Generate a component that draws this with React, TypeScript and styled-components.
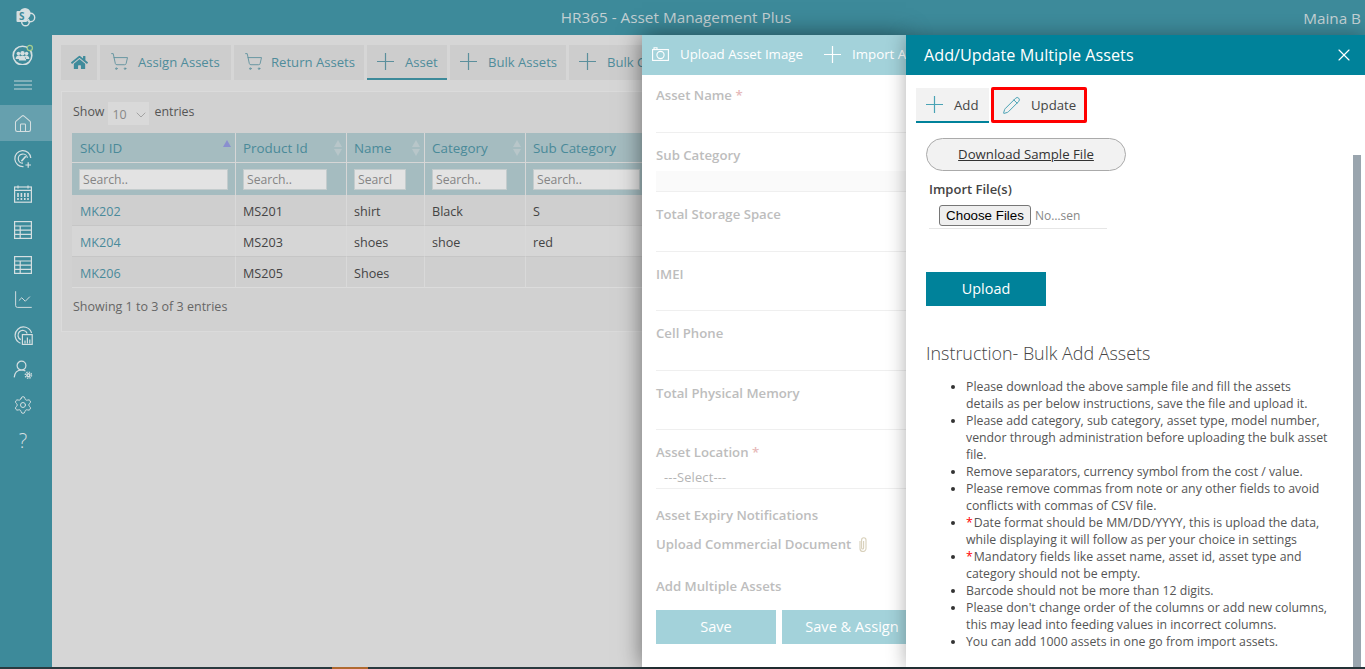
import * as React from 'react'
import styled, { createGlobalStyle } from 'styled-components'
import { ChevronDown, Home, LineChart, Pencil, Settings, ShoppingCart, X } from 'lucide-react'
import { FaHome } from 'react-icons/fa'

const GlobalStyle = createGlobalStyle`
  html, body {
    margin: 0;
    height: 100%;
    overflow: hidden;
    font-family: 'Open Sans', 'Noto Sans', sans-serif;
  }
  * { box-sizing: border-box; }
`

const QuestionMark = styled.span`
  font-size: 20px;
  font-weight: 300;
`

const PlusIcon = ({ size = 17, color = 'currentColor' }: { size?: number; color?: string }) => (
  <svg width={size} height={size} viewBox="0 0 17 17" fill="none" stroke={color} strokeWidth="1.2">
    <path d="M0 8.5h17M8.5 0v17" />
  </svg>
)

const CameraIcon = () => (
  <svg width="17" height="14" viewBox="0 0 17 14" fill="none" stroke="#fff" strokeWidth="1.1">
    <rect x="0.6" y="2.6" width="15.8" height="10.8" />
    <circle cx="8.5" cy="8" r="3.6" />
    <path d="M2 2.4V.8h3v1.6" />
  </svg>
)

const ClipGlyph = () => (
  <svg width="8" height="15" viewBox="0 0 8 15" fill="none" stroke="#d8d0ba" strokeWidth="1.1">
    <path d="M1 4v7.5a3 3 0 0 0 6 0V3a2.2 2.2 0 0 0-4.4 0v8a1 1 0 0 0 2 0V4" />
  </svg>
)

const LogoIcon = () => (
  <svg width="20" height="20" viewBox="0 0 20 20">
    <circle cx="9" cy="6.5" r="5.6" fill="#d5dfe1" />
    <circle cx="14.5" cy="10.5" r="4.2" fill="none" stroke="#d5dfe1" strokeWidth="1.4" />
    <circle cx="9.5" cy="15" r="3.8" fill="none" stroke="#d5dfe1" strokeWidth="1.4" />
    <rect x="0.5" y="4" width="10.5" height="11" rx="1" fill="#d5dfe1" />
    <text x="5.7" y="13" fontSize="10" fontWeight="700" textAnchor="middle" fill="#3d8a9a" fontFamily="'Open Sans', sans-serif">S</text>
  </svg>
)

const TeamIcon = () => (
  <svg width="22" height="22" viewBox="0 -1 22 22">
    <circle cx="10.5" cy="11.5" r="9.3" fill="none" stroke="#d5dfe1" strokeWidth="1.6" />
    <circle cx="6.4" cy="9.6" r="1.8" fill="#d5dfe1" />
    <circle cx="14.6" cy="9.6" r="1.8" fill="#d5dfe1" />
    <circle cx="10.5" cy="9.2" r="2.2" fill="#d5dfe1" />
    <path d="M3.6 15c0-2.4 1.4-3.6 2.9-3.6s2 .6 2 .6l-1 3zM17.4 15c0-2.4-1.4-3.6-2.9-3.6s-2 .6-2 .6l1 3zM6.8 16.4c0-3 1.6-4.6 3.7-4.6s3.7 1.6 3.7 4.6z" fill="#d5dfe1" />
    <circle cx="17.8" cy="4" r="2.6" fill="#3d8a9a" stroke="#a6cf8e" strokeWidth="1.2" />
  </svg>
)

const HamburgerIcon = () => (
  <svg width="18" height="18" viewBox="0 0 18 18" fill="none" stroke="#d5dfe1" strokeWidth="0.9">
    <path d="M0 1h18M0 5h18M0 9h18" />
  </svg>
)

const GaugeIcon = () => (
  <svg width="20" height="20" viewBox="0 0 20 20" fill="none" stroke="#d5dfe1" strokeWidth="1.2">
    <path d="M10.5 17.6A8 8 0 1 1 17.8 9" />
    <path d="M10 14.2a4.6 4.6 0 1 1 4.4-5.4" />
    <path d="M8.4 12.2l4.4-5" strokeWidth="1.6" />
    <path d="M15.2 13.2v5.6M12.4 16h5.6" />
  </svg>
)

const CalendarIcon = () => (
  <svg width="18" height="18" viewBox="0 0 18 18" fill="none" stroke="#d5dfe1" strokeWidth="1.2">
    <rect x="0.6" y="2" width="16.8" height="15.2" />
    <path d="M.6 5.4h16.8M4 .4v3M14 .4v3" />
    <path d="M4 8v7M7.4 8v7M10.8 8v7M14 8v7" strokeWidth="1.6" strokeDasharray="4 1" />
  </svg>
)

const GridIcon = () => (
  <svg width="18" height="18" viewBox="0 0 18 18" fill="none" stroke="#d5dfe1" strokeWidth="1.2">
    <rect x="0.6" y="0.6" width="16.8" height="16.8" />
    <path d="M.6 5h16.8M.6 9.2h16.8M.6 13.4h16.8M6.2 5v12.4" />
  </svg>
)

const RadarIcon = () => (
  <svg width="19" height="19" viewBox="0 0 19 19" fill="none" stroke="#d5dfe1" strokeWidth="1.2">
    <path d="M6.5 17.2A8.4 8.4 0 1 1 17.6 7" />
    <path d="M6.8 13.6a4.8 4.8 0 1 1 6.4-6.2" />
    <rect x="8.4" y="8.6" width="9.8" height="9.8" />
    <path d="M11 17.6v-3M13.4 17.6v-6M15.8 17.6v-4" />
  </svg>
)

const UserGearIcon = () => (
  <svg width="20" height="20" viewBox="0 0 20 20" fill="none" stroke="#d5dfe1" strokeWidth="1.2">
    <circle cx="8.5" cy="5.6" r="4.4" />
    <path d="M1.2 17.4c.4-4.4 3.2-7.4 7.3-7.4 1.5 0 2.8.4 3.9 1.1" />
    <circle cx="15.4" cy="15.2" r="1.5" strokeWidth="1.6" />
    <circle cx="15.4" cy="15.2" r="3.2" strokeWidth="1.2" strokeDasharray="1.4 1.1" />
  </svg>
)

type SideItem = { icon: React.ReactNode; active?: boolean }

const sideItems: SideItem[] = [
  { icon: <TeamIcon /> },
  { icon: <HamburgerIcon /> },
  { icon: <Home size={20} strokeWidth={1.25} />, active: true },
  { icon: <GaugeIcon /> },
  { icon: <CalendarIcon /> },
  { icon: <GridIcon /> },
  { icon: <GridIcon /> },
  { icon: <LineChart size={21} strokeWidth={1.1} /> },
  { icon: <RadarIcon /> },
  { icon: <UserGearIcon /> },
  { icon: <Settings size={20} strokeWidth={1.2} /> },
  { icon: <QuestionMark>?</QuestionMark> },
]

const tabs = [
  { label: 'Assign Assets', icon: <ShoppingCart size={19} strokeWidth={1.1} />, width: 131, gap: 9 },
  { label: 'Return Assets', icon: <ShoppingCart size={19} strokeWidth={1.1} />, width: 130, gap: 8 },
  { label: 'Asset', icon: <PlusIcon />, width: 80, gap: 11, active: true },
  { label: 'Bulk Assets', icon: <PlusIcon />, width: 116, gap: 11 },
  { label: 'Bulk C', icon: <PlusIcon />, width: 130, gap: 11 },
]

const columns = [
  { label: 'SKU ID', width: 164, search: 149, sorted: true },
  { label: 'Product Id', width: 111, search: 84 },
  { label: 'Name', width: 78, search: 52, placeholder: 'Searcl' },
  { label: 'Category', width: 101, search: 75 },
  { label: 'Sub Category', width: 130, search: 107 },
]

const rows = [
  ['MK202', 'MS201', 'shirt', 'Black', 'S'],
  ['MK204', 'MS203', 'shoes', 'shoe', 'red'],
  ['MK206', 'MS205', 'Shoes', '', ''],
]

const fields = [
  { label: 'Asset Name', required: true },
  { label: 'Sub Category', shaded: true },
  { label: 'Total Storage Space' },
  { label: 'IMEI' },
  { label: 'Cell Phone' },
  { label: 'Total Physical Memory' },
]

const instructions = [
  { text: 'Please download the above sample file and fill the assets\ndetails as per below instructions, save the file and upload it.' },
  { text: 'Please add category, sub category, asset type, model number,\nvendor through administration before uploading the bulk asset\nfile.' },
  { text: 'Remove separators, currency symbol from the cost / value.' },
  { text: 'Please remove commas from note or any other fields to avoid\nconflicts with commas of CSV file.' },
  { text: 'Date format should be MM/DD/YYYY, this is upload the data,\nwhile displaying it will follow as per your choice in settings', star: true },
  { text: 'Mandatory fields like asset name, asset id, asset type and\ncategory should not be empty.', star: true },
  { text: 'Barcode should not be more than 12 digits.' },
  { text: "Please don't change order of the columns or add new columns,\nthis may lead into feeding values in incorrect columns." },
  { text: 'You can add 1000 assets in one go from import assets.' },
]

const App = () => {
  return (
    <Page>
      <GlobalStyle />
      <Header>
        <LogoSlot><LogoIcon /></LogoSlot>
        <HeaderTitle>HR365 - Asset Management Plus</HeaderTitle>
        <HeaderUser>Maina B</HeaderUser>
      </Header>
      <Body>
        <Sidebar>
          {sideItems.map((item, i) => (
            <SideButton key={i} $active={item.active}>{item.icon}</SideButton>
          ))}
        </Sidebar>
        <Main>
          <Tabs>
            <HomeTab><FaHome size={17} /></HomeTab>
            {tabs.map((tab) => (
              <Tab key={tab.label} $width={tab.width} $gap={tab.gap} $active={tab.active}>
                {tab.icon}
                <span>{tab.label}</span>
              </Tab>
            ))}
          </Tabs>
          <Card>
            <ShowRow>
              Show
              <PageSize>10<ChevronDown size={16} strokeWidth={1} /></PageSize>
              entries
            </ShowRow>
            <Table>
              <thead>
                <tr>
                  {columns.map((col) => (
                    <Th key={col.label} $width={col.width}>
                      {col.label}
                      <SortMark $sorted={col.sorted} />
                    </Th>
                  ))}
                  <Th $width={700} />
                </tr>
                <tr>
                  {columns.map((col) => (
                    <SearchCell key={col.label}>
                      <SearchInput $width={col.search} placeholder={col.placeholder || 'Search..'} />
                    </SearchCell>
                  ))}
                  <SearchCell />
                </tr>
              </thead>
              <tbody>
                {rows.map((row, r) => (
                  <Row key={row[0]} $even={r % 2 === 1}>
                    {row.map((cell, c) => (
                      <Td key={c} $link={c === 0}>{cell}</Td>
                    ))}
                    <Td />
                  </Row>
                ))}
              </tbody>
            </Table>
            <Showing>Showing 1 to 3 of 3 entries</Showing>
          </Card>
        </Main>
      </Body>
      <Taskbar><TaskbarMark /></Taskbar>

      <BackDrawer>
        <BackHead>
          <BackHeadItem><CameraIcon /><span>Upload Asset Image</span></BackHeadItem>
          <BackHeadItem><PlusIcon color="#fff" /><span>Import A</span></BackHeadItem>
        </BackHead>
        <BackForm>
          {fields.map((field) => (
            <Field key={field.label}>
              <FieldLabel>
                {field.label}
                {field.required && <FaintStar> *</FaintStar>}
              </FieldLabel>
              <FieldInput $shaded={field.shaded} />
            </Field>
          ))}
          <LocationField>
            <FieldLabel>Asset Location<FaintStar> *</FaintStar></FieldLabel>
            <SelectValue>---Select---</SelectValue>
          </LocationField>
          <PlainLabel $top={16}>Asset Expiry Notifications</PlainLabel>
          <PlainLabel $top={9}>
            Upload Commercial Document
            <ClipGlyph />
          </PlainLabel>
          <PlainLabel $top={22}>Add Multiple Assets</PlainLabel>
          <BackActions>
            <FadedButton $width={120}>Save</FadedButton>
            <FadedButton $width={140}>Save &amp; Assign</FadedButton>
          </BackActions>
        </BackForm>
      </BackDrawer>

      <FrontDrawer>
        <FrontHead>
          <FrontTitle>Add/Update Multiple Assets</FrontTitle>
          <CloseButton><X size={20} strokeWidth={1.4} /></CloseButton>
        </FrontHead>
        <ModeTabs>
          <AddTab><PlusIcon color="#4aa3b5" /><span>Add</span></AddTab>
          <UpdateTab><Pencil size={19} strokeWidth={1.2} color="#3f9db0" /><span>Update</span></UpdateTab>
        </ModeTabs>
        <FrontBody>
          <DownloadButton>Download Sample File</DownloadButton>
          <ImportLabel>Import File(s)</ImportLabel>
          <FileRow><FileInput type="file" multiple /></FileRow>
          <UploadButton>Upload</UploadButton>
          <InstructionTitle>Instruction- Bulk Add Assets</InstructionTitle>
          <InstructionList>
            {instructions.map((item) => (
              <Instruction key={item.text} $star={item.star}>{item.text}</Instruction>
            ))}
          </InstructionList>
        </FrontBody>
        <ScrollThumb />
      </FrontDrawer>
    </Page>
  )
}

const Page = styled.div`
  position: relative;
  width: 1365px;
  height: 669px;
  overflow: hidden;
  display: flex;
  flex-direction: column;
  background: #d6d6d6;
`

const Header = styled.header`
  height: 35px;
  flex: none;
  display: flex;
  align-items: center;
  justify-content: center;
  position: relative;
  background: #3d8a9a;
  color: #c3d0d3;
  font-size: 15.3px;
`

const LogoSlot = styled.div`
  position: absolute;
  left: 16px;
  top: 7px;
`

const HeaderTitle = styled.div`
  margin-left: -13px;
  margin-top: -1px;
`

const HeaderUser = styled.div`
  position: absolute;
  right: 4px;
  top: 8px;
`

const Body = styled.div`
  flex: 1;
  min-height: 0;
  display: flex;
`

const Sidebar = styled.nav`
  width: 52px;
  flex: none;
  background: #3d8a9a;
`

const SideButton = styled.div<{ $active?: boolean }>`
  height: 35.2px;
  display: flex;
  align-items: center;
  justify-content: center;
  padding: 2px 6px 0 0;
  color: #d5dfe1;
  background: ${(p) => (p.$active ? '#66a0ae' : 'transparent')};
`

const Main = styled.main`
  flex: 1;
  min-width: 0;
  padding: 10px 9px 0;
`

const Tabs = styled.div`
  display: flex;
  gap: 3px;
  height: 35px;
`

const HomeTab = styled.div`
  width: 36px;
  display: flex;
  align-items: center;
  justify-content: center;
  background: #cdcdcd;
  color: #3f8b9b;
`

const Tab = styled.div<{ $width: number; $gap: number; $active?: boolean }>`
  width: ${(p) => p.$width}px;
  flex: none;
  display: flex;
  align-items: center;
  gap: ${(p) => p.$gap}px;
  padding-left: 10px;
  background: #cdcdcd;
  color: #4f8c9b;
  font-size: 13.1px;
  white-space: nowrap;
  border-bottom: 2px solid ${(p) => (p.$active ? '#3d8a9a' : 'transparent')};
  svg { color: #5b8f9c; flex: none; }
  span { margin-top: 1px; }
`

const Card = styled.section`
  margin-top: 11px;
  height: 241px;
  padding: 10px;
  background: #d1d1d1;
  border: 1px solid #dbdbdb;
`

const ShowRow = styled.div`
  display: flex;
  align-items: flex-start;
  height: 23px;
  gap: 5px;
  padding-left: 1px;
  font-size: 12.4px;
  line-height: 19px;
  color: #555;
`

const PageSize = styled.div`
  width: 41px;
  height: 23px;
  display: flex;
  align-items: center;
  justify-content: space-between;
  margin-left: -1px;
  padding: 2px 0 0 4px;
  background: #d9d9d9;
  color: #888;
`

const Table = styled.table`
  margin-top: 8px;
  border-collapse: separate;
  border-spacing: 0;
  table-layout: fixed;
  width: 1284px;
`

const Th = styled.th<{ $width: number }>`
  position: relative;
  width: ${(p) => p.$width}px;
  height: 30px;
  padding: 0 0 0 7px;
  background: #a5bcc0;
  color: #4a8a99;
  font-size: 13.4px;
  font-weight: 400;
  text-align: left;
  border-right: 1px solid #d6d6d6;
  border-bottom: 1px solid #d6d6d6;
  &:first-child { padding-left: 8px; }
`

const SortMark = styled.i<{ $sorted?: boolean }>`
  position: absolute;
  right: 4px;
  top: 7px;
  width: 0;
  border-left: 4px solid transparent;
  border-right: 4px solid transparent;
  border-bottom: 7px solid ${(p) => (p.$sorted ? '#8a8fcf' : '#b8c6c9')};
  &::after {
    content: '';
    display: ${(p) => (p.$sorted ? 'none' : 'block')};
    position: absolute;
    left: -4px;
    top: 9px;
    border-left: 4px solid transparent;
    border-right: 4px solid transparent;
    border-top: 7px solid #b8c6c9;
  }
`

const SearchCell = styled.th`
  height: 32px;
  padding: 0 0 0 7px;
  background: #a5bcc0;
  border-right: 1px solid #d6d6d6;
  text-align: left;
`

const SearchInput = styled.input<{ $width: number }>`
  display: block;
  width: ${(p) => p.$width}px;
  height: 21px;
  padding: 1px 2px 0 3px;
  border: 1px solid #c4cccd;
  border-radius: 0;
  outline: none;
  background: #e3e3e3;
  font-family: inherit;
  font-size: 12.2px;
  &::placeholder { color: #858585; opacity: 1; }
`

const Row = styled.tr<{ $even: boolean }>`
  background: ${(p) => (p.$even ? '#d6d6d6' : '#cfcfcf')};
`

const Td = styled.td<{ $link?: boolean }>`
  height: 31px;
  padding: 2px 0 0 7px;
  color: ${(p) => (p.$link ? '#4a8a9b' : '#444')};
  font-size: 12.6px;
  border-right: 1px solid #d9d9d9;
  border-bottom: 1px solid #c6c6c6;
  &:first-child { padding-left: 8px; }
  tr:last-child > & { border-bottom-color: #dcdcdc; }
`

const Showing = styled.div`
  margin: 10px 0 0 1px;
  font-size: 12.5px;
  color: #666;
`

const Taskbar = styled.div`
  height: 2px;
  flex: none;
  background: #2a3a3f;
  position: relative;
`

const TaskbarMark = styled.div`
  position: absolute;
  left: 332px;
  top: 0;
  width: 36px;
  height: 2px;
  background: #b06a30;
`

const BackDrawer = styled.aside`
  position: absolute;
  left: 642px;
  top: 35px;
  bottom: 2px;
  width: 264px;
  background: #fff;
  box-shadow: 0 0 22px rgba(0, 0, 0, 0.5);
`

const BackHead = styled.div`
  height: 40px;
  display: flex;
  align-items: center;
  gap: 21px;
  padding: 0 0 2px 10px;
  background: #a3d2da;
  color: #fff;
  font-size: 13.3px;
`

const BackHeadItem = styled.div`
  display: flex;
  align-items: center;
  gap: 11px;
  white-space: nowrap;
`

const BackForm = styled.div`
  margin-left: 14px;
  padding-top: 10px;
`

const Field = styled.div`
  height: 59.5px;
  border-bottom: 1px solid #efefef;
  display: flex;
  flex-direction: column;
  &:first-child { height: 47.5px; }
`

const labelText = `
  font-size: 13.2px;
  font-weight: 600;
  line-height: 20px;
  color: #bdbdbd;
  white-space: nowrap;
`

const FieldLabel = styled.div`
  ${labelText}
  ${Field}:not(:first-child) & { margin-top: 12px; }
`

const FieldInput = styled.div<{ $shaded?: boolean }>`
  flex: 1;
  margin-top: 6px;
  background: ${(p) => (p.$shaded ? '#fafafa' : '#fff')};
`

const FaintStar = styled.span`
  color: #e6b8b8;
`

const LocationField = styled.div`
  height: 59px;
  padding-top: 12px;
  border-bottom: 1px solid #efefef;
`

const SelectValue = styled.div`
  margin: 7px 0 0 8px;
  font-size: 12.8px;
  letter-spacing: 0.2px;
  line-height: 17px;
  color: #b5b5b5;
`

const PlainLabel = styled.div<{ $top: number }>`
  ${labelText}
  margin-top: ${(p) => p.$top}px;
  display: flex;
  align-items: center;
  gap: 8px;
`

const BackActions = styled.div`
  display: flex;
  gap: 6px;
  margin-top: 14px;
`

const FadedButton = styled.div<{ $width: number }>`
  flex: none;
  width: ${(p) => p.$width}px;
  height: 34px;
  display: flex;
  align-items: center;
  justify-content: center;
  padding-bottom: 2px;
  background: #a3d2da;
  color: #fff;
  font-size: 14.6px;
`

const FrontDrawer = styled.aside`
  position: absolute;
  left: 906px;
  top: 35px;
  bottom: 2px;
  right: 0;
  background: #fff;
  box-shadow: 0 0 18px rgba(0, 0, 0, 0.32);
`

const FrontHead = styled.div`
  height: 40px;
  display: flex;
  align-items: center;
  justify-content: space-between;
  padding: 0 11px 0 18px;
  background: #00829a;
  color: #fff;
`

const FrontTitle = styled.div`
  font-size: 16.2px;
`

const CloseButton = styled.div`
  display: flex;
`

const ModeTabs = styled.div`
  display: flex;
  align-items: flex-end;
  gap: 2px;
  height: 36px;
  margin: 12px 0 0 10px;
`

const AddTab = styled.div`
  width: 73px;
  height: 35px;
  display: flex;
  align-items: center;
  gap: 11px;
  padding-left: 10px;
  background: #f2f2f2;
  border-bottom: 2px solid #00829a;
  color: #444;
  font-size: 13.2px;
`

const UpdateTab = styled.div`
  width: 96px;
  height: 36px;
  display: flex;
  align-items: center;
  gap: 10px;
  padding-left: 8px;
  background: #f2f2f2;
  border: 3px solid #f00;
  border-radius: 2px;
  color: #444;
  font-size: 13.2px;
`

const FrontBody = styled.div`
  padding: 15px 0 0 20px;
`

const DownloadButton = styled.div`
  width: 200px;
  height: 33px;
  display: flex;
  align-items: center;
  justify-content: center;
  padding-bottom: 1px;
  border: 1px solid #aaa;
  border-radius: 17px;
  background: #f2f2f2;
  color: #333;
  font-size: 13.2px;
  text-decoration: underline;
`

const ImportLabel = styled.div`
  margin: 8px 0 0 3px;
  font-size: 13px;
  font-weight: 600;
  line-height: 20px;
  color: #444;
`

const FileRow = styled.div`
  width: 178px;
  height: 24px;
  margin: 6px 0 0 3px;
  padding-left: 10px;
  border-bottom: 1px solid #e6e6e6;
`

const FileInput = styled.input`
  display: block;
  width: 143px;
  height: 21px;
  color: #888;
  font-family: 'Open Sans', sans-serif;
  font-size: 12px;
  &::file-selector-button {
    height: 21px;
    width: 92px;
    padding: 0;
    margin-right: 4px;
    font-family: 'Liberation Sans', sans-serif;
    font-size: 13.33px;
    color: #000;
    background: #efefef;
    border: 1px solid #767676;
    border-radius: 3px;
  }
`

const UploadButton = styled.div`
  width: 120px;
  height: 34px;
  margin-top: 43px;
  display: flex;
  align-items: center;
  justify-content: center;
  padding-bottom: 2px;
  background: #00829a;
  color: #fff;
  font-size: 14.4px;
`

const InstructionTitle = styled.h3`
  margin: 35px 0 0;
  font-size: 17.9px;
  font-weight: 300;
  line-height: 24px;
  color: #444;
`

const InstructionList = styled.ul`
  margin: 13px 0 0;
  padding: 0 0 0 40px;
  font-size: 12.3px;
  line-height: 17px;
  color: #555;
  white-space: pre;
`

const Instruction = styled.li<{ $star?: boolean }>`
  &::marker { color: #333; }
  &::before {
    content: ${(p) => (p.$star ? "'*'" : 'none')};
    color: #f00;
    margin-right: 1px;
  }
`

const ScrollThumb = styled.div`
  position: absolute;
  right: 4px;
  top: 120px;
  bottom: 0;
  width: 8px;
  background: #9aa5ae;
`

export default App
